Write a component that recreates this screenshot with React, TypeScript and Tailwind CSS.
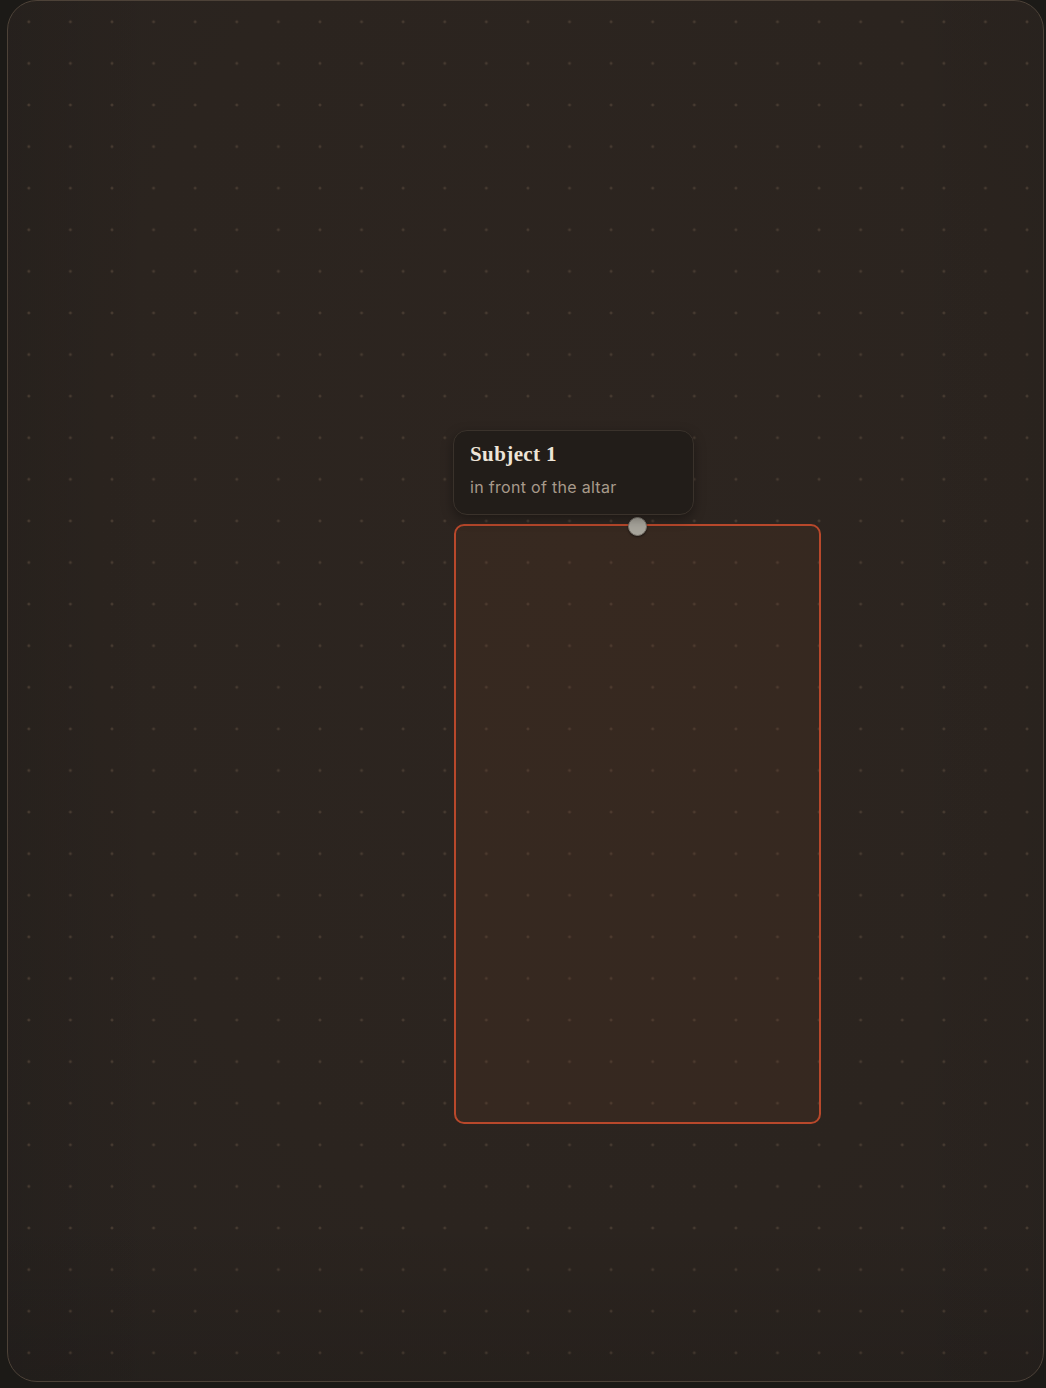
import React from "react";

export default function App() {
  return (
    <div className="w-[1046px] h-[1388px] bg-[#1c1a17] relative overflow-hidden">
      <div className="absolute left-[7px] top-0 w-[1037px] h-[1382px] rounded-[30px] border border-[#4d4238] overflow-hidden bg-[radial-gradient(ellipse_at_55%_40%,#2d2520_0%,#2b241f_60%,#282320_100%)]">
        <div className="absolute inset-0 bg-[linear-gradient(90deg,rgba(0,0,0,0.08)_0%,rgba(0,0,0,0)_15%,rgba(0,0,0,0)_85%,rgba(0,0,0,0.04)_100%)]" />
        <div className="absolute inset-0 bg-[radial-gradient(circle,#473b31_1.3px,transparent_1.7px)] bg-[size:41.6px_41.6px] bg-[position:0px_0px]" />
        <div className="absolute inset-0 bg-[linear-gradient(180deg,rgba(0,0,0,0)_88%,rgba(0,0,0,0.10)_100%)]" />

        {/* region */}
        <div className="absolute left-[446px] top-[523px] w-[367px] h-[600px] rounded-[10px] border-2 border-[#b8482b] bg-[rgba(110,60,35,0.16)]" />

        {/* handle */}
        <div className="absolute left-[620px] top-[516px] w-[19px] h-[19px] rounded-full bg-[#a7a49b] border border-[#7c776f] shadow-[0_1px_2px_rgba(0,0,0,0.5)]" />

        {/* card */}
        <div className="absolute left-[445px] top-[429px] w-[241px] h-[85px] rounded-[14px] border border-[#3a322b] bg-[#221d19] shadow-[0_4px_12px_rgba(0,0,0,0.35)] px-[16px] pt-[10px]">
          <div className="font-['Liberation_Serif',serif] font-bold text-[21px] leading-[26px] text-[#eee5d8] tracking-[0.4px]">
            Subject 1
          </div>
          <div className="mt-[10px] font-['Inter',sans-serif] text-[16px] leading-[20px] text-[#a89a8b] tracking-[0.3px]">
            in front of the altar
          </div>
        </div>
      </div>
    </div>
  );
}
